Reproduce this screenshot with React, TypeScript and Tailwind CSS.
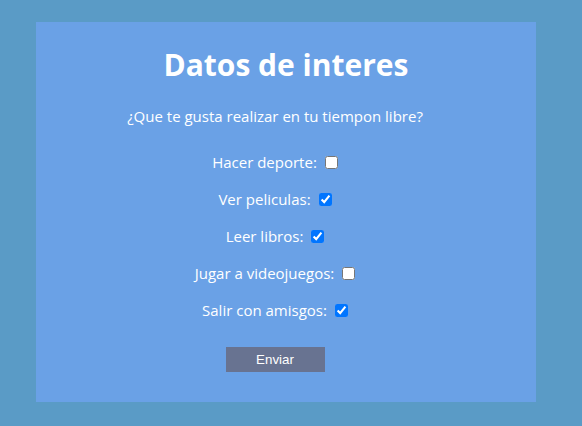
import React from "react";

const items: { label: string; checked: boolean }[] = [
  { label: "Hacer deporte:", checked: false },
  { label: "Ver peliculas:", checked: true },
  { label: "Leer libros:", checked: true },
  { label: "Jugar a videojuegos:", checked: false },
  { label: "Salir con amisgos:", checked: true },
];

export default function App() {
  return (
    <div
      className="min-h-screen w-full bg-[#5a9bc6] px-[36px] pt-[22px] text-white"
      style={{ fontFamily: '"Open Sans", "Noto Sans", sans-serif' }}
    >
      <div className="flex h-[380px] w-[500px] flex-col items-center bg-[#6aa1e6] pt-[23px]">
        <h1 className="text-[30px] font-bold leading-[40px]">Datos de interes</h1>
        <div className="flex w-full flex-col items-center pr-[22px]">
          <p className="mt-[19px] text-[15px] leading-[24px]">
            ¿Que te gusta realizar en tu tiempon libre?
          </p>
          <div className="mt-[22px] flex flex-col items-center gap-[13px]">
            {items.map((it) => (
              <label key={it.label} className="flex h-[24px] items-center text-[15px] leading-[24px]">
                <span>{it.label}</span>
                <input
                  type="checkbox"
                  defaultChecked={it.checked}
                  className="ml-[8px] h-[13px] w-[13px]"
                />
              </label>
            ))}
          </div>
          <button
            type="button"
            className="mt-[25px] h-[25px] w-[99px] bg-[#687391] text-[13.33px] text-white"
            style={{ fontFamily: '"Liberation Sans", Arial, sans-serif' }}
          >
            Enviar
          </button>
        </div>
      </div>
    </div>
  );
}
